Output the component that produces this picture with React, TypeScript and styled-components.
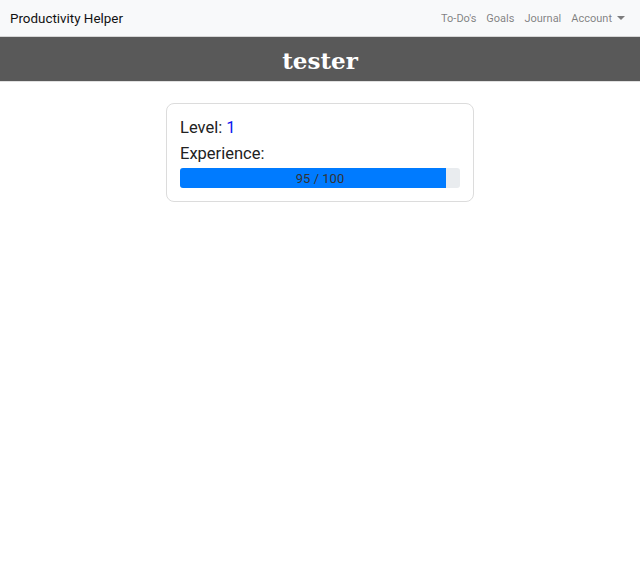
import { createGlobalStyle, styled } from 'styled-components'

const GlobalStyle = createGlobalStyle`
    * { box-sizing: border-box; }
    body {
        margin: 0;
        font-family: Roboto, "Liberation Sans", sans-serif;
        color: #212529;
        background: #fff;
    }
`

export default function App(){
    const exp = 95
    const max = 100
    return(
        <>
            <GlobalStyle />
            <NavBar>
                <Brand>Productivity Helper</Brand>
                <NavLinks>
                    <NavLink>To-Do's</NavLink>
                    <NavLink>Goals</NavLink>
                    <NavLink>Journal</NavLink>
                    <NavLink>Account <Caret /></NavLink>
                </NavLinks>
            </NavBar>
            <Header>tester</Header>
            <Main>
                <Card>
                    <StatLine>Level: <LevelNum>1</LevelNum></StatLine>
                    <StatLine>Experience:</StatLine>
                    <Progress>
                        <ProgressFill style={{ width: `${(exp / max) * 100}%` }} />
                        <ProgressLabel>{exp} / {max}</ProgressLabel>
                    </Progress>
                </Card>
            </Main>
        </>
    )
}

const NavBar = styled.nav`
    display: flex;
    align-items: center;
    justify-content: space-between;
    height: 37px;
    padding: 0 15px 0 10px;
    background: #f8f9fa;
    border-bottom: 1px solid #d6d6d6;
`

const Brand = styled.div`
    font-size: 13.4px;
    color: #111;
`

const NavLinks = styled.div`
    display: flex;
    align-items: center;
    gap: 10px;
`

const NavLink = styled.span`
    display: flex;
    align-items: center;
    font-size: 11px;
    color: rgba(0, 0, 0, 0.5);
`

const Caret = styled.span`
    display: inline-block;
    margin-left: 5px;
    width: 0;
    height: 0;
    border-left: 4px solid transparent;
    border-right: 4px solid transparent;
    border-top: 4px solid rgba(0, 0, 0, 0.5);
`

const Header = styled.header`
    display: flex;
    align-items: center;
    justify-content: center;
    height: 45px;
    background: #595959;
    color: #fff;
    font-family: "DejaVu Serif", "Liberation Serif", serif;
    font-weight: 700;
    font-size: 23px;
    padding-top: 3px;
    border-bottom: 1px solid #e0e0e0;
`

const Main = styled.main`
    display: flex;
    justify-content: center;
    padding-top: 21px;
`

const Card = styled.div`
    display: flex;
    flex-direction: column;
    width: 308px;
    padding: 11px 13px 13px;
    border: 1px solid #dcdcdc;
    border-radius: 8px;
`

const StatLine = styled.div`
    font-size: 16.5px;
    line-height: 26px;
    color: #222;
`

const LevelNum = styled.span`
    color: #0a14f0;
`

const Progress = styled.div`
    position: relative;
    display: flex;
    height: 20px;
    margin-top: 1px;
    background: #e9ecef;
    border-radius: 3px;
    overflow: hidden;
`

const ProgressFill = styled.div`
    background: #007bff;
    height: 100%;
`

const ProgressLabel = styled.span`
    position: absolute;
    inset: 0;
    display: flex;
    align-items: center;
    justify-content: center;
    font-size: 13px;
    color: #333;
`
